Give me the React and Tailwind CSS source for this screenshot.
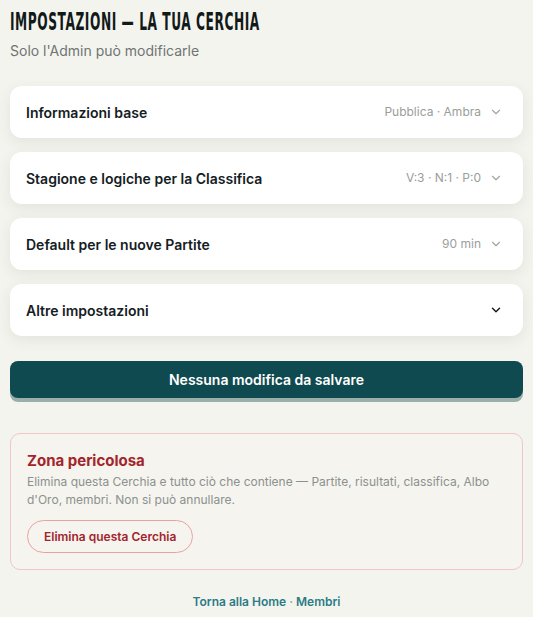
import React from "react";
import { ChevronDown } from "lucide-react";

const sections = [
	{ title: "Informazioni base", meta: "Pubblica · Ambra" },
	{ title: "Stagione e logiche per la Classifica", meta: "V:3 · N:1 · P:0" },
	{ title: "Default per le nuove Partite", meta: "90 min" },
	{ title: "Altre impostazioni", meta: null },
];

const App = () => {
	return (
		<div
			className="min-h-screen bg-[#f4f4ef] px-[10px] pt-[8px] pb-[8px] text-[#14201f]"
			style={{ fontFamily: "Inter, 'Noto Sans', sans-serif" }}
		>
			{/* Header */}
			<h1
				className="origin-left scale-x-[0.565] whitespace-nowrap text-[24px] font-bold uppercase leading-[28px] tracking-[1px] text-[#111a19]"
				style={{ fontFamily: "'Liberation Sans Narrow', 'DejaVu Sans Condensed', sans-serif" }}
			>
				Impostazioni — La tua Cerchia
			</h1>
			<p className="mt-[5px] text-[14px] leading-[20px] text-[#6e7572]">Solo l'Admin può modificarle</p>

			{/* Collapsible sections */}
			<div className="mt-[25px] flex flex-col gap-[14px]">
				{sections.map((s) => (
					<button
						key={s.title}
						className="flex h-[52px] w-full items-center justify-between rounded-[12px] bg-white pl-[16px] pr-[20px] text-left shadow-[0_4px_14px_rgba(60,70,60,0.09)]"
					>
						<span className="text-[14px] font-semibold text-[#14201f]">{s.title}</span>
						<span className="flex items-center gap-[8px]">
							{s.meta && <span className="text-[12px] text-[#9a9e9b]">{s.meta}</span>}
							<ChevronDown
								size={14}
								strokeWidth={s.meta ? 2 : 2.5}
								className={s.meta ? "text-[#a2a6a3]" : "text-[#14201f]"}
							/>
						</span>
					</button>
				))}
			</div>

			{/* Save button */}
			<button className="mt-[25px] h-[37px] w-full rounded-[8px] bg-[#0f4a50] text-[14px] font-semibold text-white shadow-[0_4px_0_#9bafaa]">
				Nessuna modifica da salvare
			</button>

			{/* Danger zone */}
			<div className="mt-[35px] rounded-[10px] border border-[#f1c6c4] bg-[#f5f4ef] px-[16px] pt-[17px] pb-[16px]">
				<h2 className="text-[15px] font-bold leading-[20px] text-[#a3252b]">Zona pericolosa</h2>
				<p className="mt-[2px] text-[12px] leading-[18px] text-[#8c918e]">
					Elimina questa Cerchia e tutto ciò che contiene — Partite, risultati, classifica, Albo d'Oro, membri. Non si può annullare.
				</p>
				<button className="mt-[11px] h-[33px] rounded-full border border-[#e8a3a1] px-[16px] text-[12px] font-semibold text-[#a3252b]">
					Elimina questa Cerchia
				</button>
			</div>

			{/* Footer links */}
			<div className="mt-[23px] text-center text-[12px] font-semibold text-[#2b7c85]">
				<a href="#">Torna alla Home</a>
				<span className="text-[#8fa9ab]"> · </span>
				<a href="#">Membri</a>
			</div>
		</div>
	);
};

export default App;
